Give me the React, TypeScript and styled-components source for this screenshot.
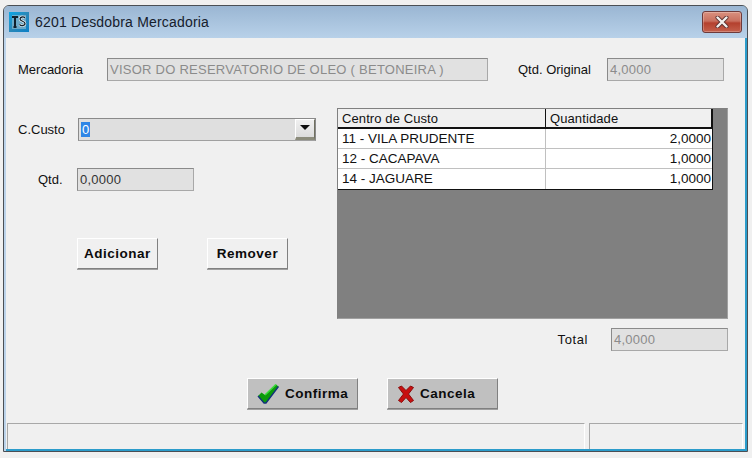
import React from "react";
import styled, { createGlobalStyle } from "styled-components";

const GlobalStyle = createGlobalStyle`
  html, body {
    margin: 0;
    padding: 0;
    background: #f0f0f0;
  }
  body {
    font-family: "Liberation Sans", Arial, sans-serif;
    font-size: 13px;
    color: #111;
  }
`;

const Page = styled.div`
  width: 752px;
  height: 458px;
  padding: 5px 0 0 3px;
  box-sizing: border-box;
  overflow: hidden;
`;

const Window = styled.div`
  width: 745px;
  height: 447px;
  box-sizing: border-box;
  display: flex;
  flex-direction: column;
  border: 1px solid #4a4f55;
  border-radius: 6px 6px 0 0;
  background: #f0f0f0;
  box-shadow: inset 2px 0 0 #bcd3ea, inset -2px 0 0 #2b9ccb, inset 0 -2px 0 #2b9ccb;
`;

const TitleBar = styled.div`
  height: 32px;
  flex: none;
  display: flex;
  align-items: center;
  padding: 0 5px 0 5px;
  border-radius: 5px 5px 0 0;
  background: linear-gradient(#9ab6d3, #b8d1e9);
`;

const TitleText = styled.span`
  margin-left: 6px;
  font-size: 14px;
  letter-spacing: 0.18px;
  color: #15202c;
`;

const CloseButton = styled.div`
  margin-left: auto;
  width: 40px;
  height: 22px;
  box-sizing: border-box;
  display: flex;
  align-items: center;
  justify-content: center;
  border: 1px solid #6e3a3a;
  border-radius: 3px;
  background: linear-gradient(#d9907f 0%, #c9705f 45%, #b4402e 55%, #c4604c 100%);
  box-shadow: inset 0 0 0 1px rgba(255, 255, 255, 0.25);
`;

const Client = styled.div`
  flex: 1;
  min-height: 0;
  display: flex;
  flex-direction: column;
  margin: 0 3px 2px 3px;
  padding-left: 11px;
`;

const TopRow = styled.div`
  display: flex;
  align-items: center;
  margin-top: 20px;
`;

const Label = styled.span<{ $width?: number; $indent?: number; $spacing?: number }>`
  flex: none;
  width: ${({ $width }) => ($width ? `${$width}px` : "auto")};
  margin-left: ${({ $indent }) => $indent ?? 0}px;
  font-size: 13px;
  letter-spacing: ${({ $spacing }) => $spacing ?? 0}px;
  white-space: nowrap;
`;

const Field = styled.div<{ $width: number; $disabled?: boolean }>`
  flex: none;
  width: ${({ $width }) => $width}px;
  height: 23px;
  box-sizing: border-box;
  padding-left: 2px;
  display: flex;
  align-items: center;
  border: 1px solid #8a8a8a;
  border-right-color: #a8a8a8;
  border-bottom-color: #a8a8a8;
  background: #e1e1e1;
  font-size: 13px;
  letter-spacing: 0.25px;
  white-space: nowrap;
  color: ${({ $disabled }) => ($disabled ? "#8b8b8b" : "#333")};
`;

const Middle = styled.div`
  display: flex;
  margin-top: 27px;
`;

const LeftColumn = styled.div`
  width: 319px;
  flex: none;
  padding-top: 10px;
`;

const FormRow = styled.div<{ $top?: number }>`
  display: flex;
  align-items: center;
  margin-top: ${({ $top }) => $top ?? 0}px;
`;

const Combo = styled.div`
  width: 238px;
  height: 23px;
  flex: none;
  box-sizing: border-box;
  display: flex;
  justify-content: space-between;
  padding-left: 2px;
  border: 1px solid #8a8a8a;
  border-bottom-color: #a0a0a0;
  background: #dfdfdf;
`;

const ComboValue = styled.span`
  align-self: center;
  padding: 0 1px;
  height: 15px;
  line-height: 15px;
  background: #2f86e6;
  color: #fff;
  font-size: 13px;
`;

const ComboArrow = styled.div`
  width: 20px;
  height: 21px;
  box-sizing: border-box;
  display: flex;
  align-items: center;
  justify-content: center;
  padding-bottom: 3px;
  background: linear-gradient(#f0f0f0, #dcdcdc);
  border-style: solid;
  border-width: 1px 1px 3px 1px;
  border-color: #fff #707060 #8c8c7c #fff;
  &::after {
    content: "";
    border-style: solid;
    border-width: 5px 5.500px 0;
    border-color: #0c0c0c transparent transparent;
  }
`;

const ActionRow = styled.div`
  display: flex;
  gap: 49px;
  margin: 47px 0 0 59px;
`;

const Button = styled.div<{ $width: number; $grey?: boolean }>`
  width: ${({ $width }) => $width}px;
  height: 31px;
  box-sizing: border-box;
  display: flex;
  align-items: center;
  justify-content: ${({ $grey }) => ($grey ? "flex-start" : "center")};
  padding-left: ${({ $grey }) => ($grey ? "9px" : "0")};
  border: 1px solid;
  border-color: #fff #808080 #808080 #fff;
  box-shadow: 0 1px 0 #a0a0a0;
  background: ${({ $grey }) => ($grey ? "#c0c0c0" : "#f0f0f0")};
  font-size: 13.5px;
  font-weight: 700;
  letter-spacing: 0.5px;
  color: #0c0c0c;
`;

const GridPanel = styled.div`
  width: 391px;
  height: 211px;
  flex: none;
  box-sizing: border-box;
  border: 1px solid;
  border-color: #808080 #a0a0a0 #a0a0a0 #808080;
  background: #808080;
`;

const Table = styled.div`
  display: grid;
  grid-template-columns: 208px 166px;
  width: 374px;
  background: #fff;
  border-right: 1px solid #111;
  border-bottom: 1px solid #111;
  box-sizing: content-box;
`;

const HeaderCell = styled.div`
  height: 20px;
  box-sizing: border-box;
  padding-left: 4px;
  line-height: 19px;
  background: #f0f0f0;
  border-bottom: 2px solid #111;
  border-right: 1px solid #111;
  font-size: 13px;
  letter-spacing: 0.1px;
  &:last-of-type {
    border-right: none;
  }
`;

const Cell = styled.div<{ $right?: boolean; $last?: boolean }>`
  height: 20px;
  box-sizing: border-box;
  padding: 0 1px 0 4px;
  line-height: 19px;
  border-bottom: ${({ $last }) => ($last ? "none" : "1px solid #c0c0c0")};
  border-right: ${({ $right }) => ($right ? "none" : "1px solid #c0c0c0")};
  text-align: ${({ $right }) => ($right ? "right" : "left")};
  font-size: 13.5px;
`;

const TotalRow = styled.div`
  display: flex;
  align-items: center;
  justify-content: flex-end;
  margin: 9px 0 0 0;
  width: 710px;
  gap: 23px;
`;

const ConfirmRow = styled.div`
  display: flex;
  gap: 29px;
  margin: 27px 0 0 229px;
`;

const ButtonText = styled.span<{ $gap: number }>`
  margin-left: ${({ $gap }) => $gap}px;
`;

const StatusBar = styled.div`
  margin: auto 0 0 -11px;
  display: flex;
  gap: 4px;
  height: 26px;
`;

const StatusPanel = styled.div<{ $width: number }>`
  width: ${({ $width }) => $width}px;
  box-sizing: border-box;
  border-top: 1px solid #a8a8a8;
  border-left: 1px solid #a8a8a8;
  border-right: 1px solid #fff;
`;

const rows = [
  { name: "11 - VILA PRUDENTE", qty: "2,0000" },
  { name: "12 - CACAPAVA", qty: "1,0000" },
  { name: "14 - JAGUARE", qty: "1,0000" },
];

const AppIcon = () => (
  <svg width="20" height="20" viewBox="0 0 20 20">
    <defs>
      <linearGradient id="appIconBg" x1="0" y1="0" x2="1" y2="1">
        <stop offset="0" stopColor="#0aa6e6" />
        <stop offset="0.5" stopColor="#2a88b8" />
        <stop offset="1" stopColor="#0a80c8" />
      </linearGradient>
    </defs>
    <rect width="20" height="20" fill="url(#appIconBg)" />
    <rect x="3" y="3" width="14" height="14" fill="#9cc0d0" opacity="0.6" />
    <path d="M3 5h6M6 5v10M4.500 15h3" stroke="#10202c" strokeWidth="2" fill="none" />
    <path d="M16 6c-1-1.500-5-1.500-5 1 0 2.500 5 2 5 4.500 0 2.500-4 2.500-5.500 1" stroke="#f2f6f8" strokeWidth="2.600" fill="none" />
    <path d="M16 6c-1-1.500-5-1.500-5 1 0 2.500 5 2 5 4.500 0 2.500-4 2.500-5.500 1" stroke="#10202c" strokeWidth="1.300" fill="none" />
  </svg>
);

const CloseGlyph = () => (
  <svg width="14" height="12" viewBox="0 0 14 12">
    <path d="M2.500 1.500l9 9M11.500 1.500l-9 9" stroke="#5a3030" strokeWidth="4" strokeLinecap="round" />
    <path d="M2.500 1.500l9 9M11.500 1.500l-9 9" stroke="#f4f0ee" strokeWidth="2.400" strokeLinecap="round" />
  </svg>
);

const CheckIcon = () => (
  <svg width="22" height="20" viewBox="0 0 22 20">
    <path d="M1 12l3.500-3.500L8 11 19 .5l2.500 2L9 19H7z" fill="#0c9a0c" />
    <path d="M1 12l6 7h2L21.500 2.500" fill="none" stroke="#12307c" strokeWidth="1.300" strokeLinejoin="round" />
    <path d="M8 11L19 .5" stroke="#3cdc3c" strokeWidth="1.600" />
  </svg>
);

const CrossIcon = () => (
  <svg width="18" height="18" viewBox="0 0 18 18">
    <path d="M1.500 2.500L4.500 1 9 5.500 13.500 1l3 1.500L11.500 9l5 6.500-3 2L9 12.500l-4.500 5-3-2L6.500 9z" fill="#c81010" stroke="#8a0c0c" strokeWidth="1" strokeLinejoin="round" />
  </svg>
);

const App = () => {
  return (
    <Page>
      <GlobalStyle />
      <Window>
        <TitleBar>
          <AppIcon />
          <TitleText>6201 Desdobra Mercadoria</TitleText>
          <CloseButton>
            <CloseGlyph />
          </CloseButton>
        </TitleBar>
        <Client>
          <TopRow>
            <Label $width={89}>Mercadoria</Label>
            <Field $width={381} $disabled>
              VISOR DO RESERVATORIO DE OLEO ( BETONEIRA )
            </Field>
            <Label $width={89} $indent={30}>
              Qtd. Original
            </Label>
            <Field $width={117} $disabled>
              4,0000
            </Field>
          </TopRow>
          <Middle>
            <LeftColumn>
              <FormRow>
                <Label $width={60}>C.Custo</Label>
                <Combo>
                  <ComboValue>0</ComboValue>
                  <ComboArrow />
                </Combo>
              </FormRow>
              <FormRow $top={27}>
                <Label $width={39} $indent={20}>
                  Qtd.
                </Label>
                <Field $width={117}>0,0000</Field>
              </FormRow>
              <ActionRow>
                <Button $width={81}>Adicionar</Button>
                <Button $width={81}>Remover</Button>
              </ActionRow>
            </LeftColumn>
            <GridPanel>
              <Table>
                <HeaderCell>Centro de Custo</HeaderCell>
                <HeaderCell>Quantidade</HeaderCell>
                {rows.map((row, i) => (
                  <React.Fragment key={row.name}>
                    <Cell $last={i === rows.length - 1}>{row.name}</Cell>
                    <Cell $right $last={i === rows.length - 1}>
                      {row.qty}
                    </Cell>
                  </React.Fragment>
                ))}
              </Table>
            </GridPanel>
          </Middle>
          <TotalRow>
            <Label $spacing={0.6}>Total</Label>
            <Field $width={117} $disabled>
              4,0000
            </Field>
          </TotalRow>
          <ConfirmRow>
            <Button $width={111} $grey>
              <CheckIcon />
              <ButtonText $gap={6}>Confirma</ButtonText>
            </Button>
            <Button $width={111} $grey>
              <CrossIcon />
              <ButtonText $gap={5}>Cancela</ButtonText>
            </Button>
          </ConfirmRow>
          <StatusBar>
            <StatusPanel $width={578} />
            <StatusPanel $width={154} />
          </StatusBar>
        </Client>
      </Window>
    </Page>
  );
};

export default App;
